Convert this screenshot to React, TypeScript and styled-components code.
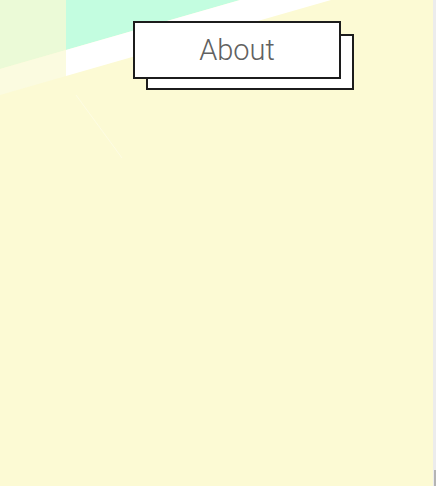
import styled, { createGlobalStyle } from 'styled-components';

const GlobalStyle = createGlobalStyle`
  html, body {
    margin: 0;
    padding: 0;
    background: #fcfad4;
    font-family: Roboto, "Noto Sans", sans-serif;
  }
`;

const Page = styled.div`
  display: flex;
  width: 436px;
  height: 486px;
  overflow: hidden;
`;

const Canvas = styled.main`
  position: relative;
  flex: 1;
  height: 100%;
  background: #fcfad4;
  overflow: hidden;
`;

const Backdrop = styled.svg`
  position: absolute;
  inset: 0;
  width: 100%;
  height: 100%;
`;

const Header = styled.header`
  position: relative;
  display: flex;
  padding: 21px 0 0 133px;
`;

const ButtonStack = styled.div`
  position: relative;
  width: 208px;
  height: 58px;
`;

const Shadow = styled.div`
  position: absolute;
  top: 13px;
  left: 13px;
  width: 208px;
  height: 56px;
  box-sizing: border-box;
  border: 2px solid #1c1c1c;
  background: #ffffff;
`;

const AboutButton = styled.button`
  position: relative;
  display: flex;
  align-items: center;
  justify-content: center;
  width: 208px;
  height: 58px;
  box-sizing: border-box;
  border: 2px solid #1c1c1c;
  background: #ffffff;
  color: #616161;
  font-family: Roboto, "Noto Sans", sans-serif;
  font-weight: 300;
  font-size: 29px;
  padding: 0;
  cursor: pointer;
`;

const ScrollTrack = styled.div`
  display: flex;
  flex-direction: column;
  justify-content: flex-end;
  width: 3px;
  background: #ececec;
`;

const ScrollThumb = styled.div`
  width: 2px;
  margin-left: 1px;
  height: 16px;
  background: #b4b4b4;
`;

export default function App() {
  return (
    <>
      <GlobalStyle />
      <Page>
        <Canvas>
          <Backdrop viewBox="0 0 433 486" preserveAspectRatio="none">
            <polygon points="66,0 240,0 66,50" fill="#c3fde0" />
            <polygon points="66,50 240,0 331,0 66,76" fill="#ffffff" />
            <polygon points="0,0 66,0 66,50 0,69" fill="#ebfad7" />
            <polygon points="0,69 66,50 66,76 0,95" fill="#fbfbe0" />
            <line x1="76" y1="95" x2="122" y2="158" stroke="#ffffff" strokeOpacity="0.35" strokeWidth="1" />
          </Backdrop>
          <Header>
            <ButtonStack>
              <Shadow />
              <AboutButton>About</AboutButton>
            </ButtonStack>
          </Header>
        </Canvas>
        <ScrollTrack>
          <ScrollThumb />
        </ScrollTrack>
      </Page>
    </>
  );
}
